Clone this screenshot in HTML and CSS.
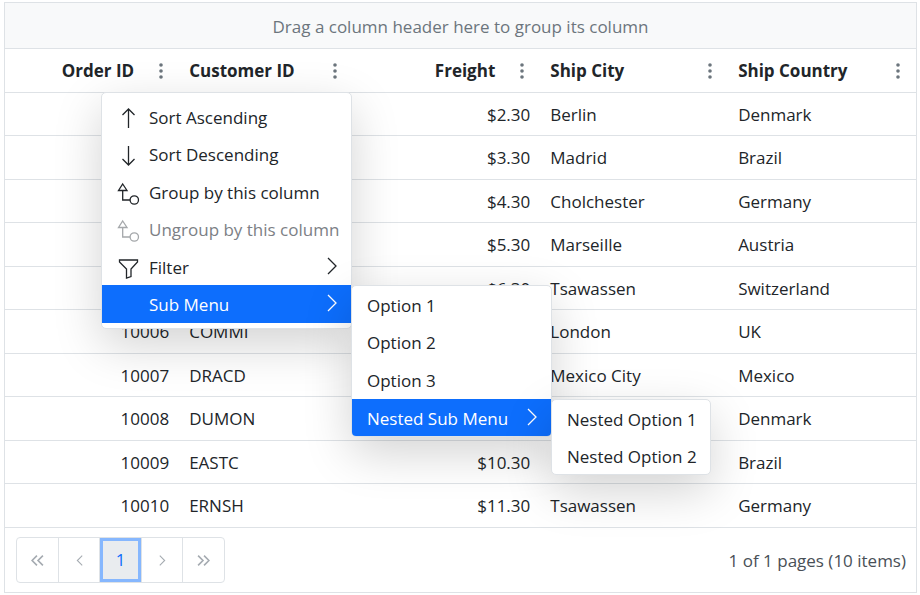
FILE: index.html
```html
<!DOCTYPE html>
<html lang="en">
<head>
<meta charset="utf-8">
<meta name="viewport" content="width=device-width, initial-scale=1">
<title>Orders</title>
<link rel="stylesheet" href="styles.css">
</head>
<body>
<svg class="symbols" aria-hidden="true">
  <symbol id="dots" viewBox="0 0 4 16"><circle cx="2" cy="2" r="1.8"/><circle cx="2" cy="8" r="1.8"/><circle cx="2" cy="14" r="1.8"/></symbol>
  <symbol id="up" viewBox="0 0 24 24"><path d="M12.500 22V3M6.500 9l6-6 6 6"/></symbol>
  <symbol id="down" viewBox="0 0 24 24"><path d="M12.500 3v19M6.500 16l6 6 6-6"/></symbol>
  <symbol id="group" viewBox="0 0 24 24"><path d="M6.700 3L11 9.500H2.500zM6.700 9.500V19H14"/><circle cx="18.300" cy="19" r="4.200"/></symbol>
  <symbol id="filter" viewBox="0 0 24 24"><path d="M3.500 4h18v2l-6.500 7v7.500l-4.500 1.500v-9l-7-7z"/></symbol>
  <symbol id="chevron" viewBox="0 0 12 18"><path d="M2 1l8 8-8 8"/></symbol>
</svg>
<main class="grid">
  <div class="group-area">Drag a column header here to group its column</div>
  <table class="orders">
    <colgroup><col class="narrow"><col class="narrow"><col class="freight"><col><col></colgroup>
    <thead>
      <tr>
        <th class="num"><div class="head"><span>Order ID</span><button class="dots" aria-label="Order ID menu"><svg><use href="#dots"/></svg></button></div></th>
        <th><div class="head"><span>Customer ID</span><button class="dots" aria-label="Customer ID menu"><svg><use href="#dots"/></svg></button></div></th>
        <th class="num"><div class="head"><span>Freight</span><button class="dots" aria-label="Freight menu"><svg><use href="#dots"/></svg></button></div></th>
        <th><div class="head"><span>Ship City</span><button class="dots" aria-label="Ship City menu"><svg><use href="#dots"/></svg></button></div></th>
        <th><div class="head"><span>Ship Country</span><button class="dots" aria-label="Ship Country menu"><svg><use href="#dots"/></svg></button></div></th>
      </tr>
    </thead>
    <tbody>
      <tr><td class="num"></td><td></td><td class="num">$2.30</td><td>Berlin</td><td>Denmark</td></tr>
      <tr><td class="num"></td><td></td><td class="num">$3.30</td><td>Madrid</td><td>Brazil</td></tr>
      <tr><td class="num"></td><td></td><td class="num">$4.30</td><td>Cholchester</td><td>Germany</td></tr>
      <tr><td class="num"></td><td></td><td class="num">$5.30</td><td>Marseille</td><td>Austria</td></tr>
      <tr><td class="num"></td><td></td><td class="num">$6.30</td><td>Tsawassen</td><td>Switzerland</td></tr>
      <tr><td class="num">10006</td><td>COMMI</td><td class="num"></td><td>London</td><td>UK</td></tr>
      <tr><td class="num">10007</td><td>DRACD</td><td class="num"></td><td>Mexico City</td><td>Mexico</td></tr>
      <tr><td class="num">10008</td><td>DUMON</td><td class="num"></td><td></td><td>Denmark</td></tr>
      <tr><td class="num">10009</td><td>EASTC</td><td class="num">$10.30</td><td></td><td>Brazil</td></tr>
      <tr><td class="num">10010</td><td>ERNSH</td><td class="num">$11.30</td><td>Tsawassen</td><td>Germany</td></tr>
    </tbody>
  </table>
  <footer class="pager">
    <nav class="pages" aria-label="Pages">
      <button disabled aria-label="First page"><svg viewBox="0 0 12 10"><path d="M5.500 .5L1 5l4.500 4.500M11 .5L6.500 5 11 9.500"/></svg></button>
      <button disabled aria-label="Previous page"><svg class="thin" viewBox="0 0 12 10"><path d="M8.500 .5L4 5l4.500 4.500"/></svg></button>
      <button class="current" aria-current="page">1</button>
      <button disabled aria-label="Next page"><svg class="thin" viewBox="0 0 12 10"><path d="M3.500 .5L8 5 3.500 9.500"/></svg></button>
      <button disabled aria-label="Last page"><svg viewBox="0 0 12 10"><path d="M1 .5L5.500 5 1 9.500M6.500 .5L11 5 6.500 9.500"/></svg></button>
    </nav>
    <span class="summary">1 of 1 pages (10 items)</span>
  </footer>
  <ul class="menu column-menu">
    <li><button><svg class="icon"><use href="#up"/></svg>Sort Ascending</button></li>
    <li><button><svg class="icon"><use href="#down"/></svg>Sort Descending</button></li>
    <li><button><svg class="icon"><use href="#group"/></svg>Group by this column</button></li>
    <li><button disabled><svg class="icon"><use href="#group"/></svg>Ungroup by this column</button></li>
    <li><button><svg class="icon"><use href="#filter"/></svg>Filter<svg class="chevron"><use href="#chevron"/></svg></button></li>
    <li><button class="open"><span class="icon"></span>Sub Menu<svg class="chevron"><use href="#chevron"/></svg></button>
      <ul class="menu submenu">
        <li><button>Option 1</button></li>
        <li><button>Option 2</button></li>
        <li><button>Option 3</button></li>
        <li><button class="open">Nested Sub Menu<svg class="chevron"><use href="#chevron"/></svg></button>
          <ul class="menu submenu nested">
            <li><button>Nested Option 1</button></li>
            <li><button>Nested Option 2</button></li>
          </ul>
        </li>
      </ul>
    </li>
  </ul>
</main>
</body>
</html>
```
FILE: styles.css
```css
* { box-sizing: border-box; }
body {
  margin: 2px 3px 2px 4px;
  background: #fff;
  color: #212529;
  font: 375 17px/24px "Open Sans", "Noto Sans", sans-serif;
}
button { font: inherit; color: inherit; background: none; border: 0; padding: 0; }
svg { fill: none; stroke: currentColor; }
.symbols { position: absolute; width: 0; height: 0; }

.grid { position: relative; border: 1px solid #dee2e6; }
.group-area {
  padding: 12px 10px 9px;
  border-bottom: 1px solid #dee2e6;
  background: #f8f9fa;
  color: #6c757d;
  text-align: center;
}

.orders { width: 100%; table-layout: fixed; border-collapse: separate; border-spacing: 0; }
.orders col { width: 20.6%; }
.orders col.narrow { width: 19.1%; }
.orders col.freight { width: 20.5%; }
.orders th, .orders td { height: 44px; padding: 0 10px; border-bottom: 1px solid #dee2e6; text-align: left; }
.orders td { padding-top: 1px; }
.orders tbody tr:nth-child(odd) td { height: 43px; }
.orders th { padding-right: 0; font-weight: 680; }
.orders .num { text-align: right; }
.head { display: flex; align-items: center; gap: 9px; }
.head span { flex: 1; white-space: nowrap; }
.dots { display: flex; justify-content: center; width: 36px; color: #6c757d; }
.dots svg { width: 4px; height: 16px; fill: currentColor; stroke: none; }

.pager { display: flex; align-items: center; justify-content: space-between; padding: 9px 10px 9px 11px; }
.pages { display: flex; border: 1px solid #dee2e6; border-radius: 4px; }
.pages button {
  display: flex; align-items: center; justify-content: center;
  width: 41px; height: 44px;
  border-left: 1px solid #dee2e6;
  color: #a5abb1;
}
.pages button:first-child { border-left: 0; }
.pages button:last-child, .pages .current { width: 42px; }
.pages svg { width: 13px; height: 11px; stroke-width: 1.500; }
.pages svg.thin { stroke-width: 1; }
.pages .current { box-shadow: inset 0 0 0 3px #86b7fe; background: #e9ecef; color: #0d6efd; }
.summary { padding-top: 2px; color: #495057; }

.menu {
  position: absolute;
  margin: 0; padding: 0;
  list-style: none;
  background: #fff;
  border: 1px solid #dee2e6;
  border-radius: 5px;
  box-shadow: 0 16px 48px rgba(0, 0, 0, .175);
}
.column-menu { left: 96px; top: 89px; width: 251px; padding: 5px 0; }
.submenu { left: 100%; top: 0; width: 201px; }
.nested { width: 160px; }
.column-menu > li { position: relative; height: 37px; }
.column-menu > li:nth-child(even) { height: 38px; }
.submenu > li { position: relative; height: 38px; }
.submenu > li:first-child, .submenu > li:last-child { height: 37px; }
.menu button { display: flex; align-items: center; width: 100%; height: 100%; padding: 2px 13px 0 15px; white-space: nowrap; }
.menu button:disabled { color: #7c8085; }
.menu button:disabled .icon { color: #a5a8ab; }
.icon { width: 24px; height: 24px; margin: 0 9px 0 -1px; flex: none; stroke-width: 1.300; }
.chevron { width: 12px; height: 18px; margin: 0 0 4px auto; stroke-width: 1.300; }
.menu .open { background: #0d6efd; color: #fff; }
.submenu > li:last-child > .open { border-radius: 0 0 4px 4px; }
```
